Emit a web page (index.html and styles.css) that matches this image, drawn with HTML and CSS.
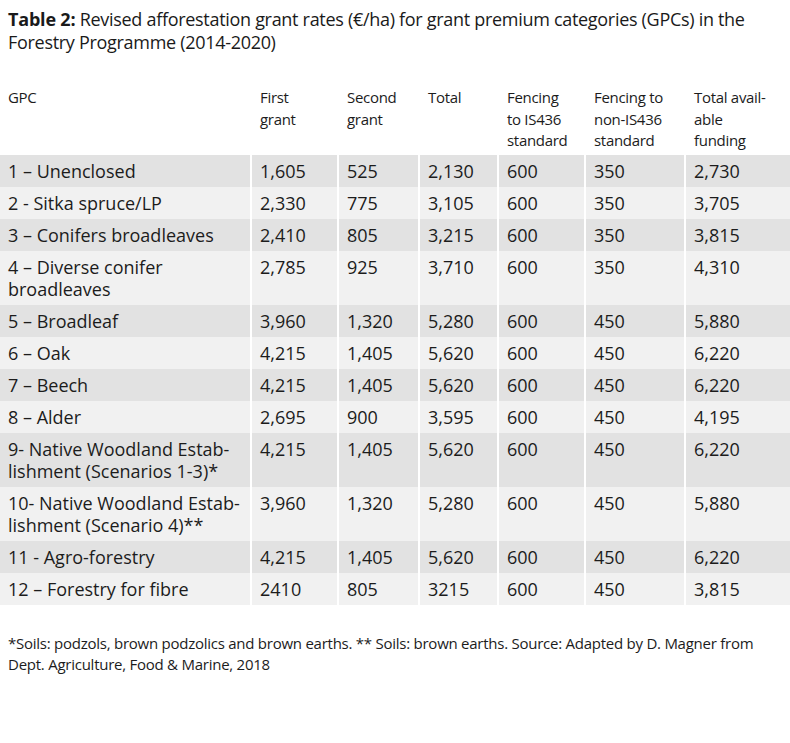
FILE: index.html
```html
<!DOCTYPE html>
<html lang="en">
<head>
<meta charset="utf-8">
<title>Table 2</title>
<link rel="stylesheet" href="styles.css">
</head>
<body>
<div class="page">
  <h1 class="caption"><b>Table 2:</b> Revised afforestation grant rates (€/ha) for grant premium categories (GPCs) in the Forestry Programme (2014-2020)</h1>
  <table class="grants">
    <colgroup>
      <col class="c1"><col class="c2"><col class="c3"><col class="c4"><col class="c5"><col class="c6"><col class="c7">
    </colgroup>
    <thead>
      <tr>
        <th>GPC</th>
        <th>First<br>grant</th>
        <th>Second<br>grant</th>
        <th>Total</th>
        <th>Fencing<br>to IS436<br>standard</th>
        <th>Fencing to<br>non-IS436<br>standard</th>
        <th>Total avail-<br>able<br>funding</th>
      </tr>
    </thead>
    <tbody>
      <tr class="dark"><td>1 – Unenclosed</td><td>1,605</td><td>525</td><td>2,130</td><td>600</td><td>350</td><td>2,730</td></tr>
      <tr class="light"><td>2 - Sitka spruce/LP</td><td>2,330</td><td>775</td><td>3,105</td><td>600</td><td>350</td><td>3,705</td></tr>
      <tr class="dark"><td>3 – Conifers broadleaves</td><td>2,410</td><td>805</td><td>3,215</td><td>600</td><td>350</td><td>3,815</td></tr>
      <tr class="light"><td>4 – Diverse conifer<br>broadleaves</td><td>2,785</td><td>925</td><td>3,710</td><td>600</td><td>350</td><td>4,310</td></tr>
      <tr class="dark"><td>5 – Broadleaf</td><td>3,960</td><td>1,320</td><td>5,280</td><td>600</td><td>450</td><td>5,880</td></tr>
      <tr class="light"><td>6 – Oak</td><td>4,215</td><td>1,405</td><td>5,620</td><td>600</td><td>450</td><td>6,220</td></tr>
      <tr class="dark"><td>7 – Beech</td><td>4,215</td><td>1,405</td><td>5,620</td><td>600</td><td>450</td><td>6,220</td></tr>
      <tr class="light"><td>8 – Alder</td><td>2,695</td><td>900</td><td>3,595</td><td>600</td><td>450</td><td>4,195</td></tr>
      <tr class="dark"><td>9- Native Woodland Estab-<br>lishment (Scenarios 1-3)*</td><td>4,215</td><td>1,405</td><td>5,620</td><td>600</td><td>450</td><td>6,220</td></tr>
      <tr class="light"><td>10- Native Woodland Estab-<br>lishment (Scenario 4)**</td><td>3,960</td><td>1,320</td><td>5,280</td><td>600</td><td>450</td><td>5,880</td></tr>
      <tr class="dark"><td>11 - Agro-forestry</td><td>4,215</td><td>1,405</td><td>5,620</td><td>600</td><td>450</td><td>6,220</td></tr>
      <tr class="light"><td>12 – Forestry for fibre</td><td>2410</td><td>805</td><td>3215</td><td>600</td><td>450</td><td>3,815</td></tr>
    </tbody>
  </table>
  <p class="note">*Soils: podzols, brown podzolics and brown earths. ** Soils: brown earths. Source: Adapted by D. Magner from Dept. Agriculture, Food &amp; Marine, 2018</p>
</div>
</body>
</html>
```

FILE: styles.css
```css
html, body {
  margin: 0;
  padding: 0;
  background: #ffffff;
}

.page {
  width: 790px;
  overflow: hidden;
  color: #1c1c1c;
}

.caption {
  margin: 0;
  padding: 8px 30px 0 8px;
  font-family: "Open Sans", "Liberation Sans", sans-serif;
  font-stretch: 90%;
  font-weight: normal;
  font-size: 18px;
  letter-spacing: -0.3px;
  line-height: 23px;
  color: #1a1a1a;
}

.caption b {
  font-weight: bold;
  letter-spacing: -0.2px;
}

.grants {
  margin: 32px -2px 0 -2px;
  width: 794px;
  table-layout: fixed;
  border-collapse: separate;
  border-spacing: 2px 0;
}

.c1 { width: 250px; }
.c2 { width: 85px; }
.c3 { width: 79px; }
.c4 { width: 77px; }
.c5 { width: 85px; }
.c6 { width: 98px; }
.c7 { width: 104px; }

.grants th {
  text-align: left;
  vertical-align: top;
  font-family: "Open Sans", "Liberation Sans", sans-serif;
  font-stretch: 90%;
  font-weight: normal;
  font-size: 15px;
  letter-spacing: -0.3px;
  line-height: 21.5px;
  padding: 1px 8px 3px 8px;
  color: #1c1c1c;
}

.grants td {
  text-align: left;
  vertical-align: top;
  font-family: "Open Sans", "DejaVu Sans", sans-serif;
  font-size: 18px;
  line-height: 22px;
  padding: 5px 8px 5px 8px;
  color: #1c1c1c;
  white-space: nowrap;
}

.grants tr.dark td {
  background: #e2e2e2;
}

.grants tr.light td {
  background: #f1f1f1;
}

.note {
  margin: 28px 0 0 0;
  padding: 0 30px 0 8px;
  font-family: "Open Sans", "Liberation Sans", sans-serif;
  font-stretch: 90%;
  font-size: 15px;
  letter-spacing: -0.25px;
  line-height: 21px;
  color: #1c1c1c;
}
```
